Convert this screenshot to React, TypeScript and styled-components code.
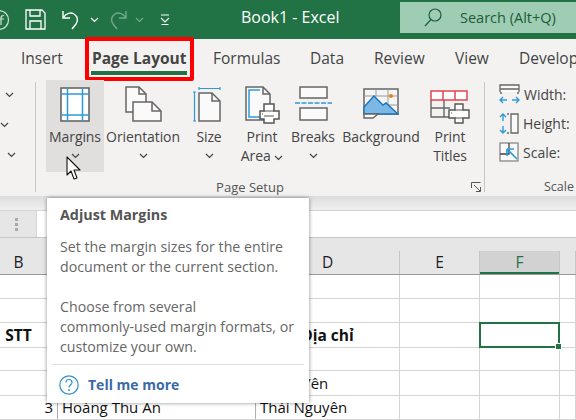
import React from "react";
import styled, { createGlobalStyle } from "styled-components";

const Global = createGlobalStyle`
  html, body { margin: 0; padding: 0; background: #fff; }
  #root { width: 576px; height: 420px; overflow: hidden; }
`;
const UI = `"Open Sans", "Noto Sans", "Liberation Sans", sans-serif`;
const Page = styled.div`
  position: relative; width: 576px; height: 420px; overflow: hidden;
  display: flex; flex-direction: column; font-family: ${UI};
`;
const TitleBar = styled.div`
  height: 39px; flex: none; background: #217346; display: flex; align-items: flex-start; color: #fff;
`;
const Quick = styled.div`
  width: 180px; height: 39px; display: flex; align-items: center; flex: none; margin-left: -12px;
`;
const QuickIcon = styled.svg<{ $ml: number }>`
  margin-left: ${p => p.$ml}px; flex: none; display: block;
`;
const DocTitle = styled.div`
  width: 159px; margin-left: 73px; flex: none; font-size: 16px; line-height: 34px; white-space: nowrap;
`;
const Search = styled.div`
  margin-top: 2px; height: 31px; flex: 1; background: #9fcdb3; display: flex; align-items: center; padding-left: 24px; gap: 18px;
  color: #1b5c3a; font-size: 14.5px; white-space: nowrap;
`;
const Tabs = styled.div`
  height: 41px; flex: none; background: #f3f2f1; display: flex; padding-left: 21px; color: #444; font-size: 15.5px;
`;
const Tab = styled.div<{ $w: number; $active?: boolean }>`
  position: relative; flex: none; width: ${p => p.$w}px; line-height: 38px; white-space: nowrap; font-weight: ${p => (p.$active ? 700 : 400)};
`;
const Underline = styled.div`
  position: absolute; left: -1px; width: 96px; top: 32px; height: 4px; background: #217346;
`;
const RedBox = styled.div`
  position: absolute; left: -7px; width: 109px; top: -2px; height: 44px; box-sizing: border-box; border: 4px solid #f00; border-radius: 2px;
`;
const Ribbon = styled.div`
  height: 116px; flex: none; background: #f3f2f1; display: flex; color: #444; font-size: 14px;
`;
const StubGroup = styled.div`
  width: 35px; flex: none; border-right: 1px solid #c8c6c4; height: 108px; margin-top: 2px; padding-top: 2px;
  display: flex; flex-direction: column; gap: 15px; color: #444;
`;
const StubRow = styled.div<{ $ml: number }>`
  margin-left: ${p => p.$ml}px; margin-top: 7px; height: 8px; display: flex; align-items: center;
`;
const Group = styled.div`
  position: relative; width: 449px; flex: none; border-right: 1px solid #c8c6c4; height: 110px; margin-top: 2px; padding-left: 10px; box-sizing: border-box;
  display: flex; flex-direction: column;
`;
const Buttons = styled.div`
  display: flex; height: 92px; margin-top: -2px; flex: none;
`;
const Btn = styled.div<{ $w: number; $hover?: boolean }>`
  width: ${p => p.$w}px; flex: none; display: flex; flex-direction: column; align-items: center; height: 92px;
  background: ${p => (p.$hover ? "#e0dfde" : "transparent")};
`;
const IconSlot = styled.div<{ $top?: number }>`
  height: 47px; flex: none; display: flex; align-items: flex-start; justify-content: center;
  padding-top: ${p => p.$top ?? 6}px; box-sizing: border-box;
`;
const Label = styled.div`
  line-height: 19px; text-align: center; white-space: nowrap; letter-spacing: -0.1px;
`;
const ChevBox = styled.div`
  height: 19px; display: flex; align-items: center; justify-content: center;
`;
const GroupLabel = styled.div`
  width: 428px; text-align: center; font-size: 13px; color: #555; margin-top: 6px; line-height: 18px; margin-left: -10px;
`;
const Launcher = styled.svg`
  position: absolute; right: 3px; top: 100px;
`;
const SideGroup = styled.div`
  flex: 1; display: flex; flex-direction: column; padding-left: 14px; padding-top: 3px; gap: 7px; height: 105px; position: relative;
`;
const SideRow = styled.div`
  height: 22px; display: flex; align-items: center; gap: 4px; white-space: nowrap;
`;
const ScaleLabel = styled.div`
  position: absolute; left: 59px; top: 98px; font-size: 12.5px; color: #555; line-height: 18px;
`;
const FormulaGap = styled.div`
  height: 14px; flex: none; background: linear-gradient(#dcdcdc, #e8e8e8 60%, #f0f0f0);
`;
const FormulaBar = styled.div`
  height: 28px; flex: none; display: flex; background: #e6e6e6; border-top: 1px solid #d4d4d4; border-bottom: 1px solid #c6c6c6; box-sizing: border-box;
`;
const Dots = styled.div`
  width: 33px; flex: none; display: flex; flex-direction: column; align-items: center; justify-content: center; gap: 2px; margin-right: 3px;
`;
const Dot = styled.i`
  width: 3px; height: 3px; background: #a8a8a8; display: block;
`;
const FormulaInput = styled.div`
  flex: 1; background: #fff; border-left: 1px solid #d4d4d4;
`;
const HeadStrip = styled.div`
  height: 13px; flex: none; background: #e6e6e6;
`;
const cols = "58px 198px 144px 80px 80px 16px";
const HeaderRow = styled.div`
  height: 23px; flex: none; display: grid; grid-template-columns: ${cols}; background: #e6e6e6; border-bottom: 1px solid #9a9a9a;
`;
const HeadCell = styled.div<{ $sel?: boolean; $pr?: number }>`
  font-family: "Open Sans", sans-serif; font-size: 15.5px; color: ${p => (p.$sel ? "#217346" : "#1c1c2c")}; text-align: center; line-height: 22px;
  background: ${p => (p.$sel ? "#d2d2d2" : "transparent")}; padding-right: ${p => p.$pr ?? 0}px; box-sizing: border-box;
  box-shadow: ${p => (p.$sel ? "inset 0 -2px 0 #217346" : "none")}; border-right: 1px solid #c6c6c6;
`;
const Sheet = styled.div`
  flex: 1; display: flex; flex-direction: column; background: #fff;
`;
const Row = styled.div`
  height: 24px; flex: none; display: grid; grid-template-columns: ${cols};
`;
const Cell = styled.div<{ $align?: string; $bold?: boolean; $pr?: number; $dark?: boolean }>`
  position: relative; box-sizing: border-box; border-right: 1px solid ${p => (p.$dark ? "#b0b0b0" : "#d4d4d4")}; border-bottom: 1px solid #d4d4d4;
  font-family: "Open Sans", sans-serif; font-size: ${p => (p.$bold ? 15.5 : 15)}px; line-height: 24px; color: #111; white-space: nowrap;
  text-align: ${p => p.$align ?? "left"}; font-weight: ${p => (p.$bold ? 700 : 400)};
  padding: 0 ${p => p.$pr ?? 0}px 0 ${p => (p.$align === "left" || !p.$align ? 4 : 0)}px;
`;
const Selection = styled.div`
  position: absolute; left: -1px; top: -1px; right: -1px; bottom: -1px; border: 2px solid #217346; z-index: 1;
`;
const Handle = styled.div`
  position: absolute; right: -4px; bottom: -4px; width: 5px; height: 5px; background: #217346; border: 1px solid #fff;
`;
const Tip = styled.div`
  position: absolute; left: 47px; top: 198px; width: 262px; height: 205px; background: #fff; box-sizing: border-box; z-index: 5;
  box-shadow: 0 0 4px rgba(0,0,0,.45); padding: 7px 5px 0 13px; color: #666; font-size: 14.2px; line-height: 20px;
`;
const TipTitle = styled.div`
  font-weight: 700; color: #555; font-size: 14.3px; line-height: 20px; margin-bottom: 12px;
`;
const TipPara = styled.p`
  margin: 0 0 20px; white-space: pre-line;
`;
const TipRule = styled.div`
  height: 1px; background: #dedede; margin: -13px 0 0 -8px;
`;
const TipLink = styled.div`
  display: flex; align-items: center; gap: 9px; margin-top: 10px; font-weight: 700; color: #3a6ba5; font-size: 14px; margin-left: -1px;
`;
const Cursor = styled.svg`
  position: absolute; left: 66px; top: 156px; z-index: 6;
`;

const Chev = ({ c = "#444", o = 1 }: { c?: string; o?: number }) => (
  <svg width="9" height="6" viewBox="0 0 9 6" style={{ opacity: o }}><path d="M1 1l3.5 3.5L8 1" fill="none" stroke={c} strokeWidth="1.2" /></svg>
);

const G = "#666";
const B = "#2f9ad8";

const MarginsIcon = () => (
  <svg width="30" height="36" viewBox="0 0 30 36">
    <rect x="1" y="1" width="28" height="33" fill="#fff" stroke={G} strokeWidth="1.6" />
    <path d="M7.500 1v33M22.500 1v33M1 7h28M1 28h28" stroke={B} strokeWidth="1.500" fill="none" />
  </svg>
);
const OrientIcon = () => (
  <svg width="37" height="36" viewBox="0 0 37 36">
    <path d="M1 1h13l7 7v18H1z" fill="#fafafa" stroke={G} strokeWidth="1.500" />
    <path d="M14 1v7h7" fill="none" stroke={G} strokeWidth="1.500" />
    <path d="M8 16h19l9 9v10H8z" fill="#fafafa" stroke={G} strokeWidth="1.500" />
    <path d="M27 16v9h9" fill="none" stroke={G} strokeWidth="1.500" />
  </svg>
);
const SizeIcon = () => (
  <svg width="33" height="35" viewBox="0 0 33 35">
    <path d="M6 1.500h21M6 0v3M27 0v3M1.500 5v29M0 5h3M0 34h3" stroke={B} strokeWidth="1.200" fill="none" />
    <path d="M6 6h13l8 8v20H6z" fill="#fafafa" stroke={G} strokeWidth="1.500" />
    <path d="M19 6v8h8" fill="none" stroke={G} strokeWidth="1.500" />
  </svg>
);
const PrintAreaIcon = () => (
  <svg width="35" height="38" viewBox="0 0 35 38">
    <path d="M1 1h17l7 7v26H1z" fill="#fafafa" stroke={G} strokeWidth="1.500" />
    <path d="M18 1v7h7" fill="none" stroke={G} strokeWidth="1.500" />
    <path d="M15 4H4v27h11" fill="none" stroke={B} strokeWidth="1.500" />
    <path d="M19 18h10v7h5v8h-5v4H19v-4h-4v-8h4z" fill="#fff" stroke="#555" strokeWidth="1.500" />
    <path d="M19 25h10M19 30h10M17 28h1" stroke="#555" strokeWidth="1.200" />
  </svg>
);
const BreaksIcon = () => (
  <svg width="37" height="35" viewBox="0 0 37 35">
    <path d="M5 1h27v11H5zM5 22h27v12H5z" fill="#fafafa" stroke={G} strokeWidth="1.500" />
    <path d="M0 17h37" stroke={B} strokeWidth="1.400" strokeDasharray="5 1.500" />
  </svg>
);
const BackgroundIcon = () => (
  <svg width="36" height="31" viewBox="0 0 36 31">
    <rect x="1" y="1" width="34" height="25" fill="#f5f5f5" stroke={G} strokeWidth="1.500" />
    <path d="M13 1v7M25 1v25M1 8h34M1 17h34" stroke="#999" strokeWidth="1" />
    <path d="M1 19l10-11 9 9 3-2 12 11H1z" fill="#7cb8e6" stroke="#1b75b8" strokeWidth="1.400" />
    <circle cx="28" cy="8" r="2" fill="#e48312" />
    <path d="M1 26v4h9l5-4z" fill="#fff" stroke={G} strokeWidth="1.400" />
  </svg>
);
const PrintTitlesIcon = () => (
  <svg width="40" height="34" viewBox="0 0 40 34">
    <path d="M1 10v17h20M1 18h19M14 10v17" stroke={G} fill="none" strokeWidth="1.400" />
    <path d="M1 1h36v9H1zM13 1v9M25 1v9" fill="#fff" stroke="#e0474c" strokeWidth="1.500" />
    <path d="M25 14h8v6h6v8h-6v5h-8v-5h-6v-8h6z" fill="#fff" stroke="#555" strokeWidth="1.400" />
    <path d="M25 20h8M25 28h8M21 23h1" stroke="#555" />
  </svg>
);
const WidthIcon = () => (
  <svg width="21" height="20" viewBox="0 0 21 20">
    <path d="M1 8V1h19v7M1 5h19M1 9h2M18 9h2" fill="#fafafa" stroke={G} strokeWidth="1.300" />
    <path d="M1 16h7M13 16h7M4 13l-3 3 3 3M17 13l3 3-3 3" fill="none" stroke={B} strokeWidth="1.400" />
  </svg>
);
const HeightIcon = () => (
  <svg width="20" height="21" viewBox="0 0 20 21">
    <path d="M12 1h7v19h-7zM8 1h2M8 20h2" fill="#fafafa" stroke={G} strokeWidth="1.300" />
    <path d="M4 1v7M4 13v7M1 4l3-3 3 3M1 17l3 3 3-3" fill="none" stroke={B} strokeWidth="1.400" />
  </svg>
);
const ScaleIcon = () => (
  <svg width="20" height="20" viewBox="0 0 20 20">
    <rect x="1" y="1" width="18" height="18" fill="#fafafa" stroke="#888" strokeWidth="1.300" />
    <path d="M1 12h9V1" fill="none" stroke="#444" strokeWidth="1.300" />
    <path d="M8 7h7M8 7v7M8 7l10 10" fill="none" stroke={B} strokeWidth="1.700" />
  </svg>
);

const rows: { b?: string; d?: string; bold?: boolean; sel?: boolean }[] = [
  {}, {}, { b: "STT", d: "Địa chỉ", bold: true, sel: true }, {},
  { d: "Hưng Yên" },
  { b: "3", d: "Thái Nguyên" },
  {},
];

export default function App() {
  return (
    <Page>
      <Global />
      <TitleBar>
        <Quick>
          <QuickIcon $ml={0} width="22" height="22" viewBox="0 0 22 22"><circle cx="11" cy="11" r="9.500" fill="none" stroke="#fff" strokeOpacity=".8" strokeWidth="1.200" /><path d="M13 16V9c0-2 1-2.500 3-2.500M11 10h5" fill="none" stroke="#fff" strokeOpacity=".8" strokeWidth="1.200" /></QuickIcon>
          <QuickIcon $ml={15} width="21" height="21" viewBox="0 0 21 21"><path d="M1 1h16l3 3v16H1z" fill="none" stroke="#fff" strokeWidth="1.300" /><path d="M5 1v6h10V1M5 20v-8h11v8" fill="none" stroke="#fff" strokeWidth="1.300" /></QuickIcon>
          <QuickIcon $ml={15} width="20" height="20" viewBox="0 0 20 20"><path d="M2 1v7h7M2 8c3-5 8-6 11-4 3 2 5 6 2 10l-4 5" fill="none" stroke="#fff" strokeWidth="1.400" /></QuickIcon>
          <QuickIcon $ml={9} width="9" height="6" viewBox="0 0 9 6"><path d="M1 1l3.500 3.500L8 1" fill="none" stroke="#fff" strokeWidth="1.200" /></QuickIcon>
          <QuickIcon $ml={9} width="20" height="20" viewBox="0 0 20 20"><path d="M18 1v7h-7M18 8C15 3 10 2 7 4 4 6 2 10 5 14l4 5" fill="none" stroke="#fff" strokeOpacity=".38" strokeWidth="1.400" /></QuickIcon>
          <QuickIcon $ml={7} width="9" height="6" viewBox="0 0 9 6"><path d="M1 1l3.500 3.500L8 1" fill="none" stroke="#fff" strokeOpacity=".38" strokeWidth="1.200" /></QuickIcon>
          <QuickIcon $ml={16} width="10" height="11" viewBox="0 0 10 11"><path d="M1 1h8M1 4l4 4 4-4M1.500 10.500h7" fill="none" stroke="#fff" strokeWidth="1.100" /></QuickIcon>
        </Quick>
        <DocTitle>Book1 - Excel</DocTitle>
        <Search>
          <svg width="18" height="19" viewBox="0 0 18 19"><circle cx="11" cy="7" r="6" fill="none" stroke="#1b5c3a" strokeWidth="1.200" /><path d="M7 11.500L1 18" stroke="#1b5c3a" strokeWidth="1.200" /></svg>
          Search (Alt+Q)
        </Search>
      </TitleBar>
      <Tabs>
        <Tab $w={71}>Insert</Tab>
        <Tab $w={121} $active>Page Layout<Underline /><RedBox /></Tab>
        <Tab $w={97}>Formulas</Tab>
        <Tab $w={64}>Data</Tab>
        <Tab $w={81}>Review</Tab>
        <Tab $w={64}>View</Tab>
        <Tab $w={57}>Develop</Tab>
      </Tabs>
      <Ribbon>
        <StubGroup>
          <StubRow $ml={5}><Chev /></StubRow>
          <StubRow $ml={0}><Chev /></StubRow>
          <StubRow $ml={7}><Chev /></StubRow>
        </StubGroup>
        <Group>
          <Buttons>
            <Btn $w={58} $hover><IconSlot $top={7}><MarginsIcon /></IconSlot><Label>Margins</Label><ChevBox><Chev /></ChevBox></Btn>
            <Btn $w={78}><IconSlot><OrientIcon /></IconSlot><Label>Orientation</Label><ChevBox><Chev /></ChevBox></Btn>
            <Btn $w={54}><IconSlot $top={7}><SizeIcon /></IconSlot><Label>Size</Label><ChevBox><Chev /></ChevBox></Btn>
            <Btn $w={52}><IconSlot><PrintAreaIcon /></IconSlot><Label>Print</Label><Label>Area <Chev /></Label></Btn>
            <Btn $w={50}><IconSlot $top={6}><BreaksIcon /></IconSlot><Label>Breaks</Label><ChevBox><Chev /></ChevBox></Btn>
            <Btn $w={86}><IconSlot $top={8}><BackgroundIcon /></IconSlot><Label>Background</Label></Btn>
            <Btn $w={52}><IconSlot $top={10}><PrintTitlesIcon /></IconSlot><Label>Print</Label><Label>Titles</Label></Btn>
          </Buttons>
          <GroupLabel>Page Setup</GroupLabel>
          <Launcher width="10" height="10" viewBox="0 0 10 10"><path d="M.5 6V.5H9.500M3 3l6 6M5 9.500h4.500V5" fill="none" stroke="#555" strokeWidth="1" /></Launcher>
        </Group>
        <SideGroup>
          <SideRow><WidthIcon />Width:</SideRow>
          <SideRow><HeightIcon />Height:</SideRow>
          <SideRow><ScaleIcon />Scale:</SideRow>
          <ScaleLabel>Scale</ScaleLabel>
        </SideGroup>
      </Ribbon>
      <FormulaGap />
      <FormulaBar>
        <Dots><Dot /><Dot /><Dot /></Dots>
        <FormulaInput />
      </FormulaBar>
      <HeadStrip />
      <HeaderRow>
        <HeadCell $pr={20}>B</HeadCell>
        <HeadCell />
        <HeadCell>D</HeadCell>
        <HeadCell>E</HeadCell>
        <HeadCell $sel>F</HeadCell>
        <HeadCell />
      </HeaderRow>
      <Sheet>
        {rows.map((r, i) => (
          <Row key={i}>
            <Cell $align={r.bold ? "center" : "right"} $bold={r.bold} $pr={r.bold ? 20 : 4} $dark={!!r.b}>{r.b}</Cell>
            <Cell $dark={!!r.b}>{r.b === "3" ? "Hoàng Thu An" : ""}</Cell>
            <Cell $align={r.bold ? "center" : "left"} $bold={r.bold}>{r.d}</Cell>
            <Cell />
            <Cell>{r.sel && <Selection><Handle /></Selection>}</Cell>
            <Cell />
          </Row>
        ))}
      </Sheet>
      <Tip>
        <TipTitle>Adjust Margins</TipTitle>
        <TipPara>{"Set the margin sizes for the entire\ndocument or the current section."}</TipPara>
        <TipPara>{"Choose from several\ncommonly-used margin formats, or\ncustomize your own."}</TipPara>
        <TipRule />
        <TipLink>
          <svg width="20" height="20" viewBox="0 0 20 20"><circle cx="10" cy="10" r="9.200" fill="none" stroke="#2f8fd0" strokeWidth="1.200" /><path d="M7 7.500c0-4 6-4 6 0 0 2.500-3 2.500-3 5" fill="none" stroke="#2f8fd0" strokeWidth="1.200" /><circle cx="10" cy="15" r=".9" fill="#2f8fd0" /></svg>
          Tell me more
        </TipLink>
      </Tip>
      <Cursor width="16" height="25" viewBox="0 0 16 25"><path d="M1 1v18l4-4 3 8 3-1-3-8h6z" fill="#fff" stroke="#111" strokeWidth="1.100" strokeLinejoin="round" /></Cursor>
    </Page>
  );
}
